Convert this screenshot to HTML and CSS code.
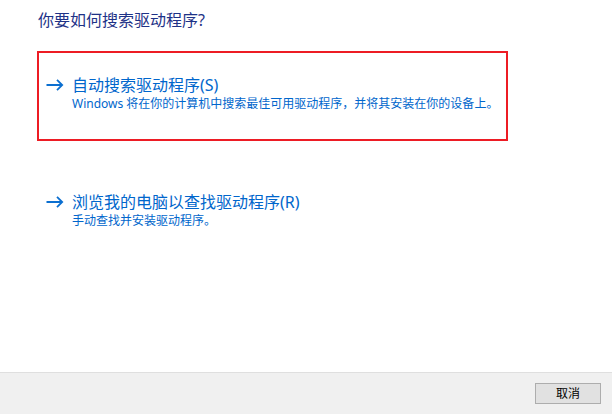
FILE: index.html
```html
<!DOCTYPE html>
<html lang="zh-CN">
<head>
<meta charset="utf-8">
<title>更新驱动程序</title>
<link rel="stylesheet" href="styles.css">
</head>
<body>
<div class="dialog">
  <main class="content">
    <h1 class="title">你要如何搜索驱动程序?</h1>
    <div class="options">
      <div class="option option-focused">
        <svg class="arrow" width="18" height="12" viewBox="0 0 18 12"><path d="M0.5 6H16.2M11 0.8L16.2 6L11 11.2" fill="none" stroke="#0b6fd0" stroke-width="1.8"/></svg>
        <div class="option-text">
          <div class="option-head">自动搜索驱动程序(S)</div>
          <div class="option-desc">Windows 将在你的计算机中搜索最佳可用驱动程序，并将其安装在你的设备上。</div>
        </div>
      </div>
      <div class="option">
        <svg class="arrow" width="18" height="12" viewBox="0 0 18 12"><path d="M0.5 6H16.2M11 0.8L16.2 6L11 11.2" fill="none" stroke="#0b6fd0" stroke-width="1.8"/></svg>
        <div class="option-text">
          <div class="option-head">浏览我的电脑以查找驱动程序(R)</div>
          <div class="option-desc">手动查找并安装驱动程序。</div>
        </div>
      </div>
    </div>
  </main>
  <footer class="footer">
    <button class="btn">取消</button>
  </footer>
</div>
</body>
</html>
```
FILE: styles.css
```css
* { box-sizing: border-box; }
html, body {
  margin: 0;
  padding: 0;
  background: #ffffff;
}
body {
  font-family: "Segoe UI", "Noto Sans", "Noto Sans CJK SC", sans-serif;
  width: 612px;
  height: 414px;
  overflow: hidden;
}
.dialog {
  display: flex;
  flex-direction: column;
  height: 414px;
}
.content {
  flex: 1;
  padding: 9px 0 0 37px;
}
.title {
  margin: 0 0 0 1px;
  font-size: 16px;
  font-weight: normal;
  line-height: 22px;
  color: #1e3287;
}
.options {
  display: flex;
  flex-direction: column;
  gap: 27px;
  margin-top: 20px;
}
.option {
  width: 471px;
  height: 90px;
  border: 2px solid transparent;
  display: flex;
  align-items: flex-start;
  padding: 21px 0 0 7px;
}
.option-focused {
  border-color: #ed1c24;
}
.arrow {
  margin-top: 5px;
  flex: none;
}
.option-text {
  margin-left: 8px;
}
.option-head {
  font-size: 16px;
  line-height: 22px;
  color: #0066cc;
}
.option-desc {
  font-size: 12px;
  line-height: 16px;
  color: #0066cc;
}
.footer {
  height: 42px;
  background: #f0f0f0;
  border-top: 1px solid #dfdfdf;
  display: flex;
  justify-content: flex-end;
  align-items: flex-start;
  padding: 10px 11px 0 0;
}
.btn {
  width: 66px;
  height: 21px;
  background: #e1e1e1;
  border: 1px solid #adadad;
  font-family: "Segoe UI", "Noto Sans", "Noto Sans CJK SC", sans-serif;
  font-size: 12px;
  color: #000;
  padding: 0;
  line-height: 18px;
}
```
